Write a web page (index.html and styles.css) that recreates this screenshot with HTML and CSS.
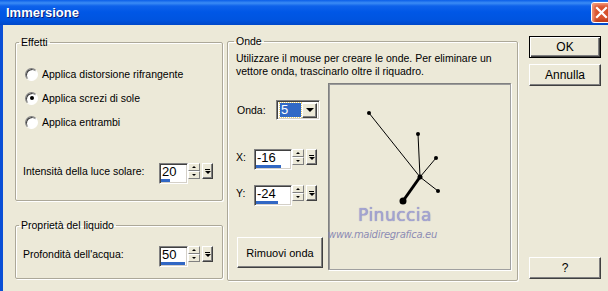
FILE: index.html
```html
<!DOCTYPE html>
<html lang="it">
  <head>
    <meta charset="UTF-8" />
    <title>Immersione</title>
    <link rel="stylesheet" href="styles.css">
  </head>
  <body>
    <div class="window">
      <div class="titlebar">
        <span class="title">Immersione</span>
        <div class="close-btn">
          <svg width="13" height="13" viewBox="0 0 13 13"><path d="M2 2 L11 11 M11 2 L2 11" stroke="#fff" stroke-width="2.2" stroke-linecap="square"/></svg>
        </div>
      </div>

      <div class="client">
        <div class="col-left">
          <fieldset class="group effetti">
            <legend>Effetti</legend>
            <label class="radio"><span class="radio-dot"></span>Applica distorsione rifrangente</label>
            <label class="radio"><span class="radio-dot checked"></span>Applica screzi di sole</label>
            <label class="radio"><span class="radio-dot"></span>Applica entrambi</label>

            <div class="field-row intensity">
              <span class="field-label">Intensità della luce solare:</span>
              <div class="spinner">
                <div class="spin-box"><span class="spin-value">20</span><span class="spin-bar" style="width: 9px"></span></div>
                <div class="spin-arrows"><span class="arrow up"></span><span class="arrow down"></span></div>
                <div class="spin-pop"><span class="pop-line"></span><span class="pop-tri"></span></div>
              </div>
            </div>
          </fieldset>

          <fieldset class="group liquido">
            <legend>Proprietà del liquido</legend>
            <div class="field-row">
              <span class="field-label">Profondità dell'acqua:</span>
              <div class="spinner">
                <div class="spin-box"><span class="spin-value">50</span><span class="spin-bar" style="width: 24px"></span></div>
                <div class="spin-arrows"><span class="arrow up"></span><span class="arrow down"></span></div>
                <div class="spin-pop"><span class="pop-line"></span><span class="pop-tri"></span></div>
              </div>
            </div>
          </fieldset>
        </div>

        <fieldset class="group onde">
          <legend>Onde</legend>
          <p class="hint">Utilizzare il mouse per creare le onde. Per eliminare un vettore onda, trascinarlo oltre il riquadro.</p>
          <div class="wave-area">
            <div class="wave-controls">
              <div class="wave-row onda-row">
                <span class="wave-label onda-label">Onda:</span>
                <div class="combo">
                  <span class="combo-value">5</span>
                  <span class="combo-btn"><span class="combo-tri"></span></span>
                </div>
              </div>

              <div class="wave-row x-row">
                <span class="wave-label">X:</span>
                <div class="spinner wide">
                  <div class="spin-box"><span class="spin-value">-16</span><span class="spin-bar" style="width: 25px"></span></div>
                  <div class="spin-arrows"><span class="arrow up"></span><span class="arrow down"></span></div>
                  <div class="spin-pop"><span class="pop-line"></span><span class="pop-tri"></span></div>
                </div>
              </div>

              <div class="wave-row y-row">
                <span class="wave-label">Y:</span>
                <div class="spinner wide">
                  <div class="spin-box"><span class="spin-value">-24</span><span class="spin-bar" style="width: 22px"></span></div>
                  <div class="spin-arrows"><span class="arrow up"></span><span class="arrow down"></span></div>
                  <div class="spin-pop"><span class="pop-line"></span><span class="pop-tri"></span></div>
                </div>
              </div>

              <button class="btn remove-btn">Rimuovi onda</button>
            </div>

            <div class="wave-canvas">
              <svg class="wave-svg" width="181" height="185" viewBox="0 0 181 185">
                <g stroke="#000" stroke-width="1">
                  <line x1="40" y1="29" x2="91" y2="93" />
                  <line x1="89" y1="50" x2="91" y2="93" />
                  <line x1="107" y1="74" x2="91" y2="93" />
                  <line x1="109" y1="107" x2="91" y2="93" />
                </g>
                <line x1="91" y1="93" x2="74" y2="117" stroke="#000" stroke-width="3" />
                <g fill="#000">
                  <circle cx="40" cy="29" r="2" />
                  <circle cx="89" cy="50" r="2" />
                  <circle cx="107" cy="74" r="2" />
                  <circle cx="109" cy="107" r="2" />
                  <circle cx="91" cy="93" r="2.5" />
                  <circle cx="74" cy="117" r="3.5" />
                </g>
              </svg>
              <span class="mark-name">Pinuccia</span>
              <span class="mark-site">www.maidiregrafica.eu</span>
            </div>
          </div>
        </fieldset>

        <div class="col-buttons">
          <button class="btn default-btn">OK</button>
          <button class="btn">Annulla</button>
          <button class="btn help-btn">?</button>
        </div>
      </div>
    </div>
  </body>
</html>
```

FILE: styles.css
```css
body {
  margin: 0;
  padding: 0;
  font-family: "Liberation Sans", Arial, sans-serif;
  font-size: 10.5px;
  color: #000;
  background: #ece9d8;
}

.window {
  width: 608px;
  height: 291px;
  overflow: hidden;
  background: #ece9d8;
}

.titlebar {
  height: 25px;
  display: flex;
  align-items: center;
  background: linear-gradient(#0a5ee8 0, #3b8cf5 3px, #0e62ea 6px, #0057e6 12px, #0054df 20px, #0048c9 25px);
}

.title {
  flex: 1;
  margin-left: 6px;
  color: #fff;
  font-family: "Liberation Sans", Arial, sans-serif;
  font-weight: bold;
  font-size: 13px;
  text-shadow: 1px 1px 0 #0a1e78;
}

.close-btn {
  width: 21px;
  height: 21px;
  flex-shrink: 0;
  margin-right: -4px;
  box-sizing: border-box;
  border: 1px solid #fff;
  border-radius: 3px;
  background: #d9532f;
  box-shadow: inset 2px 2px 3px #f29a7c, inset -2px -2px 3px #b83a18;
  display: flex;
  align-items: center;
  justify-content: center;
}

.client {
  display: flex;
  align-items: flex-start;
  height: 266px;
  box-sizing: border-box;
  padding: 11px 0 0 12px;
  border-left: 3px solid #0a4fd6;
}

/* group boxes */

.group {
  margin: 0;
  min-width: 0;
  box-sizing: border-box;
  border: 1px solid #aca899;
  border-radius: 2px;
  box-shadow: 1px 1px 0 #fff, inset 1px 1px 0 #fff;
}

.group legend {
  margin-left: -4px;
  padding: 0 2px;
  line-height: 13px;
}

.col-left {
  flex-shrink: 0;
  width: 208px;
}

.effetti {
  width: 208px;
  height: 165px;
  padding: 13px 9px 0 7px;
}

.liquido {
  width: 208px;
  height: 60px;
  margin-top: 18px;
  padding: 14px 9px 0 7px;
}

.radio {
  height: 24px;
  display: flex;
  align-items: center;
  margin-left: 2px;
}

.radio-dot {
  width: 11px;
  height: 11px;
  margin-right: 4px;
  border-radius: 50%;
  border: 1px solid;
  border-color: #808080 #fff #fff #808080;
  box-shadow: inset 1px 1px 0 #404040;
  background: #fff;
  display: flex;
  align-items: center;
  justify-content: center;
}

.radio-dot.checked::after {
  content: "";
  width: 4px;
  height: 4px;
  border-radius: 50%;
  background: #000;
}

.field-row {
  display: flex;
  justify-content: space-between;
  align-items: flex-start;
}

.field-row .field-label {
  line-height: 16px;
}

.intensity {
  margin-top: 29px;
}

/* spinner */

.spinner {
  display: flex;
  align-items: flex-start;
  width: 54px;
}

.spin-box {
  position: relative;
  width: 29px;
  height: 21px;
  box-sizing: border-box;
  background: #fff;
  border: 1px solid;
  border-color: #808080 #fff #fff #808080;
  box-shadow: inset 1px 1px 0 #404040, inset -1px -1px 0 #d4d0c8;
}

.spin-value {
  display: block;
  padding: 1px 0 0 2px;
  font-size: 13px;
  line-height: 14px;
}

.spin-bar {
  position: absolute;
  left: 1px;
  bottom: 1px;
  height: 3px;
  background: #3167c4;
}

.spin-arrows {
  width: 12px;
  height: 16px;
  display: flex;
  flex-direction: column;
}

.arrow {
  flex: 1;
  box-sizing: border-box;
  border: 1px solid;
  border-color: #fff #808080 #808080 #fff;
  background: #ece9d8;
  display: flex;
  align-items: center;
  justify-content: center;
}

.arrow::after {
  content: "";
  border-left: 2px solid transparent;
  border-right: 2px solid transparent;
}

.arrow.up::after {
  border-bottom: 2px solid #000;
}

.arrow.down::after {
  border-top: 2px solid #000;
}

.spin-pop {
  width: 11px;
  height: 16px;
  margin-left: 2px;
  box-sizing: border-box;
  border: 1px solid;
  border-color: #fff #404040 #404040 #fff;
  box-shadow: inset -1px -1px 0 #808080;
  background: #ece9d8;
  display: flex;
  flex-direction: column;
  align-items: center;
  justify-content: center;
  gap: 1px;
}

.pop-line {
  width: 5px;
  height: 1px;
  background: #000;
}

.pop-tri {
  border-left: 3px solid transparent;
  border-right: 3px solid transparent;
  border-top: 3px solid #000;
}

.spinner.wide {
  width: 63px;
}

.spinner.wide .spin-box {
  width: 38px;
}

/* onde */

.onde {
  flex-shrink: 0;
  width: 291px;
  height: 246px;
  margin: -1px 0 0 4px;
  padding: 4px 6px 0 8px;
}

.onde legend {
  margin-left: -2px;
}

.hint {
  margin: 0;
  line-height: 13px;
  width: 276px;
}

.wave-area {
  display: flex;
  margin-top: 5px;
}

.wave-controls {
  width: 92px;
}

.wave-row {
  display: flex;
  align-items: flex-start;
}

.wave-label {
  width: 18px;
  line-height: 16px;
}

.onda-row {
  margin-top: 17px;
  align-items: center;
}

.onda-label {
  width: 39px;
  padding-left: 1px;
}

.combo {
  width: 44px;
  height: 20px;
  box-sizing: border-box;
  display: flex;
  align-items: center;
  padding: 0 2px 0 3px;
  background: #fff;
  border: 1px solid;
  border-color: #808080 #fff #fff #808080;
  box-shadow: inset 1px 1px 0 #404040, inset -1px -1px 0 #d4d0c8;
}

.combo-value {
  width: 21px;
  height: 14px;
  box-sizing: border-box;
  background: #3169c6;
  color: #fff;
  font-size: 13px;
  line-height: 13px;
  padding-left: 1px;
  outline: 1px dotted #e8d070;
}

.combo-btn {
  width: 15px;
  height: 15px;
  margin-left: 1px;
  box-sizing: border-box;
  border: 1px solid;
  border-color: #fff #404040 #404040 #fff;
  box-shadow: inset -1px -1px 0 #808080;
  background: #ece9d8;
  display: flex;
  align-items: center;
  justify-content: center;
}

.combo-tri {
  border-left: 4px solid transparent;
  border-right: 4px solid transparent;
  border-top: 4px solid #000;
}

.x-row {
  margin-top: 29px;
}

.y-row {
  margin-top: 15px;
}

/* buttons */

.btn {
  display: block;
  box-sizing: border-box;
  font-family: "Liberation Sans", Arial, sans-serif;
  font-size: 11px;
  color: #000;
  background: #ece9d8;
  border: 1px solid;
  border-color: #fff #404040 #404040 #fff;
  box-shadow: inset -1px -1px 0 #808080;
  padding: 0;
  border-radius: 0;
}

.remove-btn {
  width: 86px;
  height: 31px;
  margin: 31px 0 0 1px;
}

.col-buttons {
  flex-shrink: 0;
  width: 72px;
  margin-left: 11px;
  display: flex;
  flex-direction: column;
}

.col-buttons .btn {
  width: 72px;
  height: 22px;
  font-size: 12px;
}

.col-buttons .default-btn {
  border: 1px solid #000;
  box-shadow: inset 1px 1px 0 #fff, inset -1px -1px 0 #404040, inset -2px -2px 0 #808080;
  margin-bottom: 6px;
}

.col-buttons .help-btn {
  margin-top: 171px;
}

/* canvas */

.wave-canvas {
  position: relative;
  width: 183px;
  height: 187px;
  box-sizing: border-box;
  border: 1px solid;
  border-color: #808080 #a0a0a0 #a0a0a0 #808080;
  box-shadow: 1px 1px 0 #fff, inset 1px 1px 0 #9a9a9a;
}

.wave-svg {
  display: block;
}

.mark-name {
  position: absolute;
  left: 29px;
  top: 121px;
  font-family: "DejaVu Sans", sans-serif;
  font-size: 17px;
  letter-spacing: 0.5px;
  color: #a4a4d2;
  text-shadow: 0 0 1px #7d7db0;
}

.mark-site {
  position: absolute;
  left: -1px;
  top: 145px;
  font-family: "DejaVu Sans", sans-serif;
  font-size: 10px;
  font-style: italic;
  letter-spacing: -0.3px;
  color: #8c8cb4;
}
```
